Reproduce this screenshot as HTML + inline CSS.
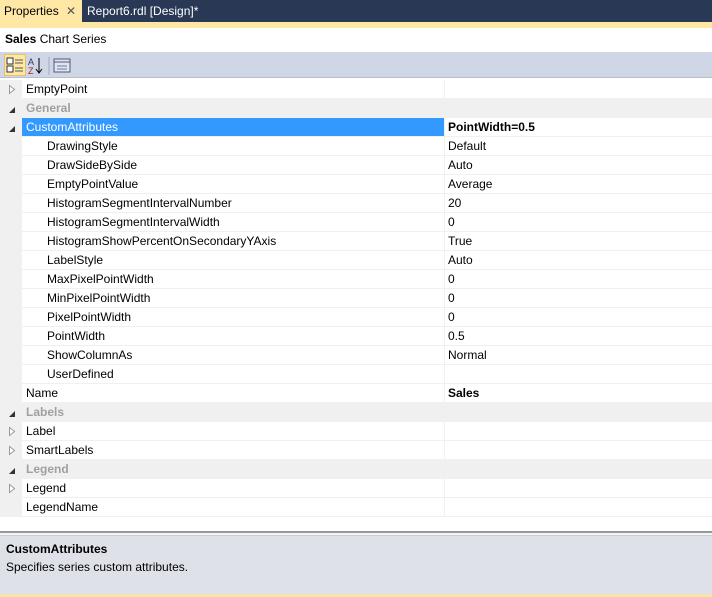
<!DOCTYPE html>
<html><head><style>
*{margin:0;padding:0;box-sizing:border-box}
body{width:712px;height:597px;overflow:hidden;background:#fff;font-family:"Liberation Sans",sans-serif;font-size:12px;color:#000;position:relative}
.abs{position:absolute}
.row{position:absolute;left:0;width:712px;height:19px;line-height:18px}
.row .g{position:absolute;left:0;top:0;width:22px;height:19px;background:#f0f0f0}
.row .n{position:absolute;left:22px;top:0;width:422px;height:19px;border-bottom:1px solid #f0f0f0;padding-left:4px;background:#fff}
.row .v{position:absolute;left:444px;top:0;width:268px;height:19px;border-bottom:1px solid #f0f0f0;border-left:1px solid #f0f0f0;padding-left:3px;background:#fff}
.row.sub .n{padding-left:25px}
.row.cat .n,.row.cat .v{background:#f0f0f0;color:#a0a0a0;font-weight:bold;border:none}
.row.sel .n{background:#3399ff;color:#fff}
.row.sel .v{font-weight:bold}
.g svg{position:absolute;left:7px;top:4px}
</style></head><body>
<div class="abs" style="left:0;top:0;width:712px;height:22px;background:#293955"></div>
<div class="abs" style="left:0;top:0;width:82px;height:22px;background:#ffe8a6;padding:4px 0 0 4px;font-size:12px">Properties <span style="color:#555;margin-left:4px">✕</span></div>
<div class="abs" style="left:87px;top:4px;color:#fff;font-size:12px">Report6.rdl [Design]*</div>
<div class="abs" style="left:0;top:22px;width:712px;height:6px;background:#ffe8a6"></div>
<div class="abs" style="left:0;top:28px;width:712px;height:24px;background:#fff;padding:4px 0 0 5px"><b>Sales</b> Chart Series</div>
<div class="abs" style="left:0;top:52px;width:712px;height:26px;background:#cfd6e5;border-bottom:1px solid #b8c0d0"></div>
<div class="abs" style="left:4px;top:54px;width:22px;height:22px;background:#ffe8a6;border:1px solid #e5c365"></div>
<svg class="abs" style="left:6px;top:56px" width="70" height="20">
<rect x="1" y="2" width="6" height="6" fill="#fff" stroke="#333"/><rect x="1" y="10" width="6" height="6" fill="#fff" stroke="#333"/>
<path d="M9 4h8M9 7h8M9 12h8M9 15h8" stroke="#555"/>
<text x="22" y="9" font-size="9" fill="#336">A</text><text x="22" y="18" font-size="9" fill="#a22">Z</text>
<path d="M33 2v14M30 13l3 4 3-4" stroke="#000" fill="none"/>
<path d="M43 1v18" stroke="#aab"/>
<rect x="48" y="3" width="16" height="13" fill="#dde6f5" stroke="#557"/><path d="M48 6h16" stroke="#557"/><path d="M51 10h10M51 13h10" stroke="#778"/>
</svg>

<div class="row" style="top:80px"><div class="g"><svg width="10" height="11"><path d="M2.5 1.5L7.5 5.5L2.5 9.5Z" fill="#fff" stroke="#999"/></svg></div><div class="n">EmptyPoint</div><div class="v"></div></div>
<div class="row cat" style="top:99px"><div class="g"><svg width="10" height="11"><path d="M2 10L8 10L8 4Z" fill="#333"/></svg></div><div class="n">General</div><div class="v"></div></div>
<div class="row sel" style="top:118px"><div class="g"><svg width="10" height="11"><path d="M2 10L8 10L8 4Z" fill="#333"/></svg></div><div class="n">CustomAttributes</div><div class="v">PointWidth=0.5</div></div>
<div class="row sub" style="top:137px"><div class="g"></div><div class="n">DrawingStyle</div><div class="v">Default</div></div>
<div class="row sub" style="top:156px"><div class="g"></div><div class="n">DrawSideBySide</div><div class="v">Auto</div></div>
<div class="row sub" style="top:175px"><div class="g"></div><div class="n">EmptyPointValue</div><div class="v">Average</div></div>
<div class="row sub" style="top:194px"><div class="g"></div><div class="n">HistogramSegmentIntervalNumber</div><div class="v">20</div></div>
<div class="row sub" style="top:213px"><div class="g"></div><div class="n">HistogramSegmentIntervalWidth</div><div class="v">0</div></div>
<div class="row sub" style="top:232px"><div class="g"></div><div class="n">HistogramShowPercentOnSecondaryYAxis</div><div class="v">True</div></div>
<div class="row sub" style="top:251px"><div class="g"></div><div class="n">LabelStyle</div><div class="v">Auto</div></div>
<div class="row sub" style="top:270px"><div class="g"></div><div class="n">MaxPixelPointWidth</div><div class="v">0</div></div>
<div class="row sub" style="top:289px"><div class="g"></div><div class="n">MinPixelPointWidth</div><div class="v">0</div></div>
<div class="row sub" style="top:308px"><div class="g"></div><div class="n">PixelPointWidth</div><div class="v">0</div></div>
<div class="row sub" style="top:327px"><div class="g"></div><div class="n">PointWidth</div><div class="v">0.5</div></div>
<div class="row sub" style="top:346px"><div class="g"></div><div class="n">ShowColumnAs</div><div class="v">Normal</div></div>
<div class="row sub" style="top:365px"><div class="g"></div><div class="n">UserDefined</div><div class="v"></div></div>
<div class="row" style="top:384px"><div class="g"></div><div class="n">Name</div><div class="v" style="font-weight:bold">Sales</div></div>
<div class="row cat" style="top:403px"><div class="g"><svg width="10" height="11"><path d="M2 10L8 10L8 4Z" fill="#333"/></svg></div><div class="n">Labels</div><div class="v"></div></div>
<div class="row" style="top:422px"><div class="g"><svg width="10" height="11"><path d="M2.5 1.5L7.5 5.5L2.5 9.5Z" fill="#fff" stroke="#999"/></svg></div><div class="n">Label</div><div class="v"></div></div>
<div class="row" style="top:441px"><div class="g"><svg width="10" height="11"><path d="M2.5 1.5L7.5 5.5L2.5 9.5Z" fill="#fff" stroke="#999"/></svg></div><div class="n">SmartLabels</div><div class="v"></div></div>
<div class="row cat" style="top:460px"><div class="g"><svg width="10" height="11"><path d="M2 10L8 10L8 4Z" fill="#333"/></svg></div><div class="n">Legend</div><div class="v"></div></div>
<div class="row" style="top:479px"><div class="g"><svg width="10" height="11"><path d="M2.5 1.5L7.5 5.5L2.5 9.5Z" fill="#fff" stroke="#999"/></svg></div><div class="n">Legend</div><div class="v"></div></div>
<div class="row" style="top:498px"><div class="g"></div><div class="n">LegendName</div><div class="v"></div></div>

<div class="abs" style="left:0;top:531px;width:712px;height:2px;background:#999"></div>
<div class="abs" style="left:0;top:533px;width:712px;height:2px;background:#f4f4f6"></div>
<div class="abs" style="left:0;top:535px;width:712px;height:60px;background:#dfe1e8;border-top:1px solid #c8ccd6;padding:4px 0 0 6px;line-height:18px"><b>CustomAttributes</b><br>Specifies series custom attributes.</div>
<div class="abs" style="left:0;top:594px;width:712px;height:3px;background:#f5e3a8"></div>
</body></html>
